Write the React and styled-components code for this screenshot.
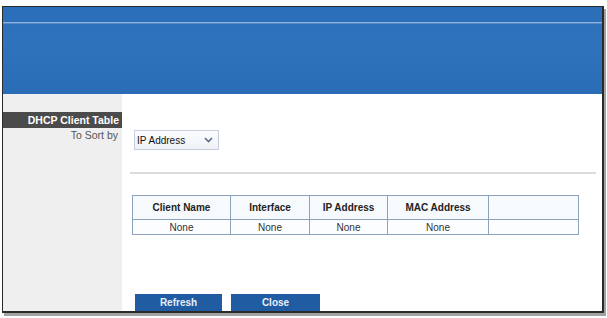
import React from "react";
import styled, { createGlobalStyle } from "styled-components";

const Global = createGlobalStyle`
  html, body { margin: 0; padding: 0; background: #ffffff; }
  body { font-family: "Liberation Sans", Arial, sans-serif; }
  #root { width: 607px; height: 318px; overflow: hidden; }
`;

const Frame = styled.div`
  margin: 6px 0 0 2px;
  width: 599px;
  height: 304px;
  border: 1px solid #2a2a2a;
  border-width: 1px 2px 2px 1px;
  box-shadow: 2px 3px 0 #a2a2a2;
  background: #fff;
  display: flex;
  flex-direction: column;
  overflow: hidden;
`;

const Header = styled.div`
  height: 87px;
  flex: none;
  background: linear-gradient(180deg, #2a6db8 0%, #2f73bd 40%, #2a6db6 100%);
  padding-top: 15px;
  box-sizing: border-box;
`;

const HeaderLine = styled.div`
  height: 1px;
  background: #8fb1de;
  box-shadow: 0 1px 0 #5589c8;
`;

const Body = styled.div`
  flex: 1;
  display: grid;
  grid-template-columns: 119px 1fr;
`;

const Side = styled.div`
  background: #efefef;
  padding-top: 18px;
  display: flex;
  flex-direction: column;
  gap: 1px;
`;

const SectionLabel = styled.div`
  background: #4b4b4b;
  color: #fff;
  font-weight: bold;
  font-size: 10.5px;
  height: 16px;
  line-height: 16px;
  text-align: right;
  padding-right: 3px;
`;

const FieldLabel = styled.div`
  color: #555;
  font-size: 10.5px;
  text-align: right;
  padding-right: 4px;
  line-height: 12px;
`;

const Main = styled.div`
  padding: 36px 6px 0 10px;
  display: flex;
  flex-direction: column;
`;

const Select = styled.div`
  width: 76px;
  height: 18px;
  margin-left: 2px;
  border: 1px solid #c5cfdc;
  background: linear-gradient(180deg, #fafcff, #eef2f7);
  display: flex;
  align-items: center;
  justify-content: space-between;
  padding: 0 5px 0 2px;
  box-sizing: content-box;
  font-size: 10px;
  color: #111;
`;

const Divider = styled.div`
  height: 2px;
  background: #dcdcdc;
  margin: 22px 0 0 -2px;
`;

const Table = styled.table`
  margin-top: 21px;
  border-collapse: collapse;
  width: 446px;
  font-size: 10px;
  table-layout: fixed;
`;

const Th = styled.th`
  border: 1px solid #8da2bd;
  height: 23px;
  padding: 0;
  font-weight: bold;
  color: #222;
  background: #f7fafd;
  text-align: center;
`;

const Td = styled.td`
  border: 1px solid #8da2bd;
  height: 14px;
  padding: 0;
  color: #333;
  background: #fbfdff;
  text-align: center;
`;

const Buttons = styled.div`
  margin-top: auto;
  display: flex;
  gap: 9px;
  padding-left: 3px;
`;

const Button = styled.div`
  width: ${(p) => p.$w}px;
  height: 17px;
  background: #1f5ca1;
  color: #e8eef7;
  font-weight: bold;
  font-size: 10px;
  display: flex;
  align-items: center;
  justify-content: center;
`;

const Chevron = () => (
  <svg width="9" height="6" viewBox="0 0 9 6">
    <path d="M1 1 L4.5 4.5 L8 1" fill="none" stroke="#5a6f8c" strokeWidth="1.6" />
  </svg>
);

export default function App() {
  const cols = [
    ["Client Name", 98],
    ["Interface", 79],
    ["IP Address", 78],
    ["MAC Address", 101],
    ["", 90],
  ];
  return (
    <>
      <Global />
      <Frame>
        <Header>
          <HeaderLine />
        </Header>
        <Body>
          <Side>
            <SectionLabel>DHCP Client Table</SectionLabel>
            <FieldLabel>To Sort by</FieldLabel>
          </Side>
          <Main>
            <Select>
              <span>IP Address</span>
              <Chevron />
            </Select>
            <Divider />
            <Table>
              <colgroup>
                {cols.map(([n, w], i) => (
                  <col key={i} style={{ width: w }} />
                ))}
              </colgroup>
              <thead>
                <tr>
                  {cols.map(([n], i) => (
                    <Th key={i}>{n}</Th>
                  ))}
                </tr>
              </thead>
              <tbody>
                <tr>
                  <Td>None</Td>
                  <Td>None</Td>
                  <Td>None</Td>
                  <Td>None</Td>
                  <Td></Td>
                </tr>
              </tbody>
            </Table>
            <Buttons>
              <Button $w={87}>Refresh</Button>
              <Button $w={89}>Close</Button>
            </Buttons>
          </Main>
        </Body>
      </Frame>
    </>
  );
}
